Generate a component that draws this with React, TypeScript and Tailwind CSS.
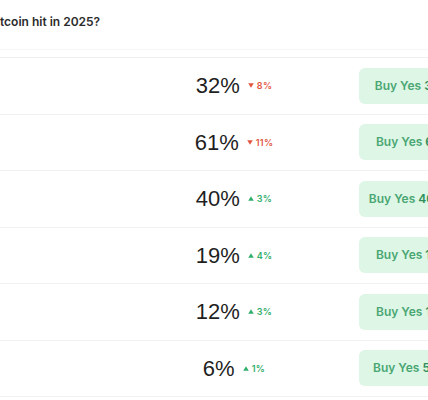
import React from "react";

type Outcome = {
  pct: number;
  change: number;
  price: string;
};

const outcomes: Outcome[] = [
  { pct: 32, change: -8, price: "32¢" },
  { pct: 61, change: -11, price: "61¢" },
  { pct: 40, change: 3, price: "40.5¢" },
  { pct: 19, change: 4, price: "19¢" },
  { pct: 12, change: 3, price: "12¢" },
  { pct: 6, change: 1, price: "5.5¢" },
];

const Change = ({ value }: { value: number }) => {
  const up = value > 0;
  return (
    <span
      className={`flex items-center gap-[3px] text-[9px] font-semibold tracking-[0.3px] ${
        up ? "text-[#2fae6a]" : "text-[#e2553f]"
      }`}
    >
      <svg width="6" height="5" viewBox="0 0 6 5" fill="currentColor">
        {up ? <path d="M3 0.3 L5.8 4.7 H0.2 Z" /> : <path d="M0.2 0.3 H5.8 L3 4.7 Z" />}
      </svg>
      {Math.abs(value)}%
    </span>
  );
};

const App: React.FC = () => {
  return (
    <div
      className="h-[400px] w-[428px] overflow-hidden bg-white"
      style={{ fontFamily: "Inter, 'Liberation Sans', sans-serif" }}
    >
      {/* title, cropped on the left */}
      <div className="flex h-[49px] items-start pt-[13px] text-[12px] font-semibold text-[#2b2b2b]">
        <span className="whitespace-nowrap">tcoin hit in 2025?</span>
      </div>

      {/* header strip */}
      <div className="h-[8px] border-t border-[#f6f6f6] bg-white" />

      <div className="border-t border-[#efefef]">
        {outcomes.map((o, i) => (
          <div
            key={i}
            className="flex h-[56.5px] items-center border-b border-[#f1f1f1]"
          >
            <div className="w-[140px] shrink-0" />
            <div className="flex w-[188px] shrink-0 items-center justify-center gap-[8px]">
              <span className="font-['Liberation_Sans',Arial,sans-serif] text-[22px] text-[#1f1f1f]">
                {o.pct}%
              </span>
              <Change value={o.change} />
            </div>
            <div className="w-[31px] shrink-0" />
            <button
              type="button"
              className="h-[36px] w-[103px] shrink-0 rounded-[6px] bg-[#ddf6e6] text-[12px] font-semibold whitespace-nowrap text-[#4aa673]"
            >
              Buy Yes <span className="text-[#2f8f59]">{o.price}</span>
            </button>
          </div>
        ))}
      </div>
    </div>
  );
};

export default App;
